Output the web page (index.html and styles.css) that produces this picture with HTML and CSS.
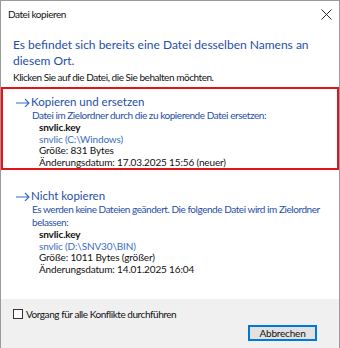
FILE: index.html
```html
<!DOCTYPE html>
<html lang="de">
<head>
    <meta charset="UTF-8">
    <title>Datei kopieren</title>
    <link rel="stylesheet" href="styles.css">
</head>
<body>
    <div class="window">
        <div class="titlebar">
            <span class="title">Datei kopieren</span>
            <svg class="close" width="11" height="11" viewBox="0 0 11 11">
                <path d="M0.5 0.5 L10.5 10.5 M10.5 0.5 L0.5 10.5" stroke="#222" stroke-width="1" fill="none"/>
            </svg>
        </div>

        <div class="content">
            <h1 class="instruction">Es befindet sich bereits eine Datei desselben Namens an diesem Ort.</h1>
            <p class="hint">Klicken Sie auf die Datei, die Sie behalten möchten.</p>

            <div class="option selected">
                <div class="option-title">
                    <svg class="arrow" width="14" height="9" viewBox="0 0 14 9">
                        <path d="M0 5 H13 M9 1 L13 5 L9 9" stroke="#2a6fc9" stroke-width="1.1" fill="none"/>
                    </svg>
                    <span>Kopieren und ersetzen</span>
                </div>
                <div class="option-desc">Datei im Zielordner durch die zu kopierende Datei ersetzen:</div>
                <div class="file">
                    <div class="file-name">snvlic.key</div>
                    <div class="file-path">snvlic (C:\Windows)</div>
                    <div>Größe: 831 Bytes</div>
                    <div>Änderungsdatum: 17.03.2025 15:56 (neuer)</div>
                </div>
            </div>

            <div class="option">
                <div class="option-title">
                    <svg class="arrow" width="14" height="9" viewBox="0 0 14 9">
                        <path d="M0 5 H13 M9 1 L13 5 L9 9" stroke="#2a6fc9" stroke-width="1.1" fill="none"/>
                    </svg>
                    <span>Nicht kopieren</span>
                </div>
                <div class="option-desc">Es werden keine Dateien geändert. Die folgende Datei wird im Zielordner belassen:</div>
                <div class="file">
                    <div class="file-name">snvlic.key</div>
                    <div class="file-path">snvlic (D:\SNV30\BIN)</div>
                    <div>Größe: 1011 Bytes (größer)</div>
                    <div>Änderungsdatum: 14.01.2025 16:04</div>
                </div>
            </div>
        </div>

        <div class="footer">
            <label class="check">
                <span class="box"></span>
                Vorgang für alle Konflikte durchführen
            </label>
            <div class="buttons">
                <button class="btn">Abbrechen</button>
            </div>
        </div>
    </div>
</body>
</html>
```

FILE: styles.css
```css
body {
    margin: 0;
    font-family: Lato, "Noto Sans", sans-serif;
    font-size: 10px;
    letter-spacing: -0.45px;
    color: #111;
    background: #fff;
}

.window {
    width: 340px;
    height: 348px;
    box-sizing: border-box;
    border: 1px solid #9a9a9a;
    border-bottom: none;
    background: #fff;
    display: flex;
    flex-direction: column;
}

.titlebar {
    height: 26px;
    flex-shrink: 0;
    display: flex;
    align-items: center;
    justify-content: space-between;
    padding: 0 7px 0 7px;
}

.content {
    flex: 1;
}

.instruction {
    margin: 10px 10px 0 12px;
    font-size: 12px;
    font-weight: normal;
    letter-spacing: 0;
    line-height: 16px;
    color: #1f4ea8;
}

.hint {
    margin: 1px 12px 3px 12px;
    line-height: 14px;
}

.option {
    border: 2px solid transparent;
    padding: 5px 16px 0 12px;
    margin-bottom: 11px;
}

.option.selected {
    border-color: #e3131b;
}

.option-title {
    display: flex;
    align-items: center;
    font-size: 11.5px;
    letter-spacing: 0;
    line-height: 15px;
    color: #1f4ea8;
}

.arrow {
    margin: 2px 1px 0 1px;
}

.option-desc {
    padding-left: 17px;
    color: #1f4ea8;
    line-height: 13px;
}

.file {
    padding-left: 24px;
    line-height: 11.5px;
    letter-spacing: -0.15px;
}

.file-name {
    font-weight: bold;
}

.file-path {
    color: #3a6cc2;
}

.footer {
    height: 49px;
    flex-shrink: 0;
    background: #f0f0f0;
    padding: 9px 0 0 12px;
    box-sizing: border-box;
}

.check {
    display: flex;
    align-items: center;
    gap: 3px;
}

.box {
    width: 10px;
    height: 10px;
    box-sizing: border-box;
    border: 1px solid #333;
    background: #fff;
}

.buttons {
    display: flex;
    justify-content: flex-end;
    margin-top: 5px;
    padding-right: 22px;
}

.btn {
    width: 69px;
    height: 16px;
    font-family: inherit;
    font-size: 10px;
    letter-spacing: -0.2px;
    color: #111;
    background: #e1e1e1;
    border: 1px solid #0078d7;
    box-shadow: inset 0 0 0 1px #0078d7;
    padding: 0;
}
```
